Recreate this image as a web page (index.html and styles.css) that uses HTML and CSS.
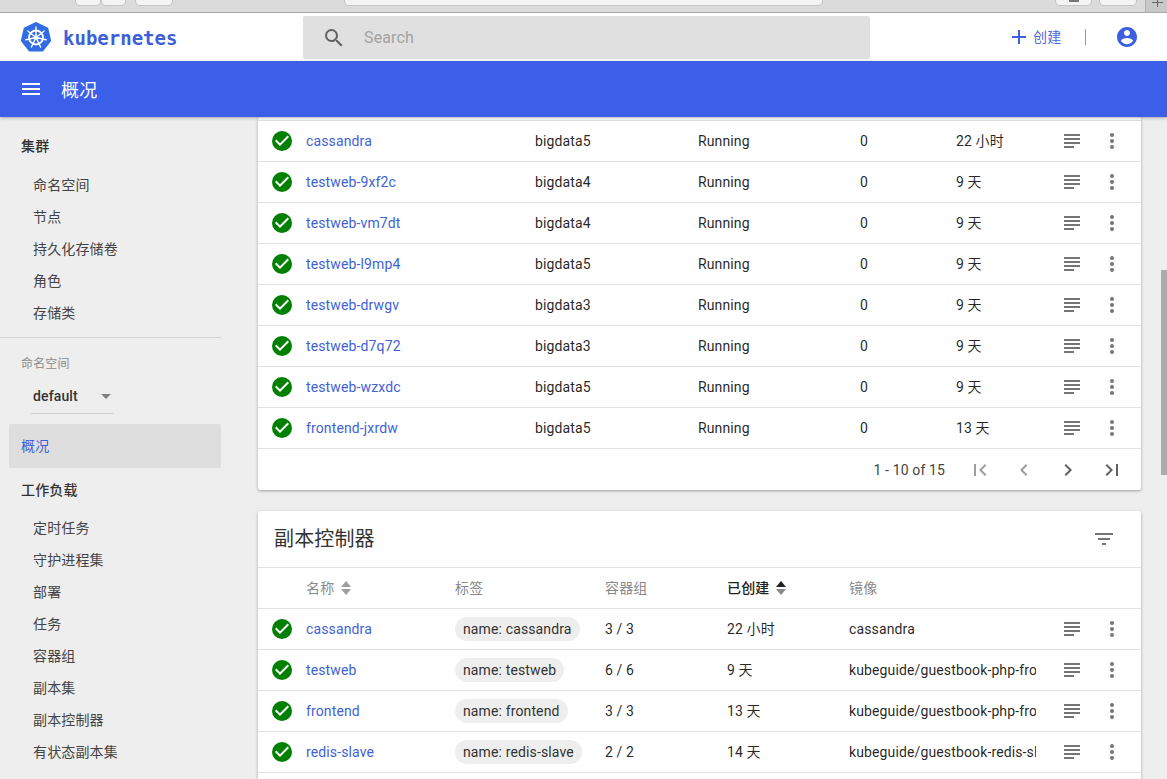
FILE: index.html
```html
<!DOCTYPE html>
<html lang="zh">
<head>
<meta charset="utf-8">
<title>Kubernetes Dashboard</title>
<link rel="stylesheet" href="styles.css">
</head>
<body>
<svg class="defs" width="0" height="0" aria-hidden="true">
  <symbol id="ok" viewBox="0 0 24 24"><path fill="#008000" d="M12 2a10 10 0 1 0 0 20 10 10 0 0 0 0-20z"/><path fill="#fff" d="M10 17l-5-5 1.41-1.41L10 14.17l7.59-7.59L19 8z"/></symbol>
  <symbol id="logs" viewBox="0 0 24 24"><path fill="#757575" d="M14 17H4v2h10v-2zm6-8H4v2h16V9zM4 15h16v-2H4v2zM4 5v2h16V5H4z"/></symbol>
  <symbol id="more" viewBox="0 0 24 24"><path fill="#757575" d="M12 8a2 2 0 1 0 0-4 2 2 0 0 0 0 4zm0 2a2 2 0 1 0 0 4 2 2 0 0 0 0-4zm0 6a2 2 0 1 0 0 4 2 2 0 0 0 0-4z"/></symbol>
  <symbol id="sort" viewBox="0 0 10 14"><path d="M5 0l5 6H0zM5 14L0 8h10z"/></symbol>
</svg>

<div class="browser">
  <div class="tabs">
    <span class="tab t1"></span><span class="tab t2"></span><span class="tab t3"></span>
    <span class="tab t4"></span><span class="tab t5"></span><span class="tab t6"></span>
  </div>
  <div class="newtab"><svg width="21" height="12" viewBox="0 0 21 12"><path fill="none" stroke="#666" d="M6 2.500h11M11.500 0v7"/></svg></div>
</div>

<header class="toolbar">
  <div class="brand">
    <svg class="logo" width="32" height="32" viewBox="0 0 32 32">
      <path fill="#326ce5" stroke="#326ce5" stroke-width="3" stroke-linejoin="round" d="M16 2.500L26.900 7.800 29.600 19.600 22.100 29.100H9.900L2.400 19.600 5.100 7.800z"/>
      <g fill="none" stroke="#fff" stroke-linecap="round">
        <circle cx="16" cy="16.500" r="7" stroke-width="1.800"/>
        <path stroke-width="1.400" d="M16 16.500V6M16 16.500L24.200 10M16 16.500L26.200 18.800M16 16.500L20.600 26M16 16.500L11.400 26M16 16.500L5.800 18.800M16 16.500L7.800 10"/>
      </g>
      <circle cx="16" cy="16.500" r="2.200" fill="#fff"/>
    </svg>
    <span class="wordmark">kubernetes</span>
  </div>
  <div class="search">
    <svg class="search-icon" width="24" height="24" viewBox="0 0 24 24"><path fill="#616161" d="M15.500 14h-.79l-.28-.27A6.470 6.470 0 0 0 16 9.500 6.500 6.500 0 1 0 9.500 16c1.610 0 3.090-.59 4.230-1.570l.27.28v.79l5 4.990L20.490 19l-4.990-5zm-6 0C7.010 14 5 11.990 5 9.500S7.010 5 9.500 5 14 7.010 14 9.500 11.990 14 9.500 14z"/></svg>
    <span class="search-text">Search</span>
  </div>
  <div class="actions">
    <svg class="plus" width="24" height="24" viewBox="0 0 24 24"><path fill="#3b5fe0" d="M19 13h-6v6h-2v-6H5v-2h6V5h2v6h6v2z"/></svg>
    <span class="create">创建</span>
    <span class="vline"></span>
    <svg class="account" width="24" height="24" viewBox="0 0 24 24"><path fill="#3b5fe0" d="M12 2C6.480 2 2 6.480 2 12s4.480 10 10 10 10-4.480 10-10S17.520 2 12 2zm0 3c1.660 0 3 1.340 3 3s-1.340 3-3 3-3-1.340-3-3 1.340-3 3-3zm0 14.200c-2.500 0-4.710-1.280-6-3.220.03-1.990 4-3.080 6-3.080 1.990 0 5.970 1.090 6 3.080-1.290 1.940-3.500 3.220-6 3.220z"/></svg>
  </div>
</header>

<div class="bluebar">
  <svg class="menu" width="24" height="24" viewBox="0 0 24 24"><path fill="#fff" d="M3 18h18v-2H3v2zm0-5h18v-2H3v2zm0-7v2h18V6H3z"/></svg>
  <span class="bluetitle">概况</span>
</div>

<div class="layout">
  <nav class="sidebar">
    <div class="nav-head first">集群</div>
    <div class="nav-item">命名空间</div>
    <div class="nav-item">节点</div>
    <div class="nav-item">持久化存储卷</div>
    <div class="nav-item">角色</div>
    <div class="nav-item">存储类</div>
    <div class="nav-divider"></div>
    <div class="ns-label">命名空间</div>
    <div class="ns-select"><span>default</span><i class="caret"></i></div>
    <div class="nav-active">概况</div>
    <div class="nav-head">工作负载</div>
    <div class="nav-item">定时任务</div>
    <div class="nav-item">守护进程集</div>
    <div class="nav-item">部署</div>
    <div class="nav-item">任务</div>
    <div class="nav-item">容器组</div>
    <div class="nav-item">副本集</div>
    <div class="nav-item">副本控制器</div>
    <div class="nav-item">有状态副本集</div>
  </nav>

  <main class="main">
    <section class="card pods">
      <div class="row pod"><svg class="ic-ok"><use href="#ok"/></svg><a>cassandra</a><span>bigdata5</span><span>Running</span><span>0</span><span>22 小时</span><svg class="ic-logs"><use href="#logs"/></svg><svg class="ic-more"><use href="#more"/></svg></div>
      <div class="row pod"><svg class="ic-ok"><use href="#ok"/></svg><a>testweb-9xf2c</a><span>bigdata4</span><span>Running</span><span>0</span><span>9 天</span><svg class="ic-logs"><use href="#logs"/></svg><svg class="ic-more"><use href="#more"/></svg></div>
      <div class="row pod"><svg class="ic-ok"><use href="#ok"/></svg><a>testweb-vm7dt</a><span>bigdata4</span><span>Running</span><span>0</span><span>9 天</span><svg class="ic-logs"><use href="#logs"/></svg><svg class="ic-more"><use href="#more"/></svg></div>
      <div class="row pod"><svg class="ic-ok"><use href="#ok"/></svg><a>testweb-l9mp4</a><span>bigdata5</span><span>Running</span><span>0</span><span>9 天</span><svg class="ic-logs"><use href="#logs"/></svg><svg class="ic-more"><use href="#more"/></svg></div>
      <div class="row pod"><svg class="ic-ok"><use href="#ok"/></svg><a>testweb-drwgv</a><span>bigdata3</span><span>Running</span><span>0</span><span>9 天</span><svg class="ic-logs"><use href="#logs"/></svg><svg class="ic-more"><use href="#more"/></svg></div>
      <div class="row pod"><svg class="ic-ok"><use href="#ok"/></svg><a>testweb-d7q72</a><span>bigdata3</span><span>Running</span><span>0</span><span>9 天</span><svg class="ic-logs"><use href="#logs"/></svg><svg class="ic-more"><use href="#more"/></svg></div>
      <div class="row pod"><svg class="ic-ok"><use href="#ok"/></svg><a>testweb-wzxdc</a><span>bigdata5</span><span>Running</span><span>0</span><span>9 天</span><svg class="ic-logs"><use href="#logs"/></svg><svg class="ic-more"><use href="#more"/></svg></div>
      <div class="row pod"><svg class="ic-ok"><use href="#ok"/></svg><a>frontend-jxrdw</a><span>bigdata5</span><span>Running</span><span>0</span><span>13 天</span><svg class="ic-logs"><use href="#logs"/></svg><svg class="ic-more"><use href="#more"/></svg></div>
      <div class="pager">
        <span class="range">1 - 10 of 15</span>
        <svg class="pg off" viewBox="0 0 24 24"><path d="M18.410 16.590L13.820 12l4.590-4.590L17 6l-6 6 6 6zM6 6h2v12H6z"/></svg>
        <svg class="pg off" viewBox="0 0 24 24"><path d="M15.410 7.410L14 6l-6 6 6 6 1.410-1.410L10.830 12z"/></svg>
        <svg class="pg" viewBox="0 0 24 24"><path d="M10 6L8.590 7.410 13.170 12l-4.580 4.590L10 18l6-6z"/></svg>
        <svg class="pg" viewBox="0 0 24 24"><path d="M5.590 7.410L10.180 12l-4.590 4.590L7 18l6-6-6-6zM16 6h2v12h-2z"/></svg>
      </div>
    </section>

    <section class="card rcs">
      <div class="card-title"><h2>副本控制器</h2>
        <svg class="filter" viewBox="0 0 24 24"><path fill="#757575" d="M10 18h4v-2h-4v2zM3 6v2h18V6H3zm3 7h12v-2H6v2z"/></svg>
      </div>
      <div class="row head">
        <span class="th first-th">名称<svg class="sort"><use href="#sort"/></svg></span>
        <span class="th">标签</span>
        <span class="th">容器组</span>
        <span class="th active">已创建<svg class="sort" viewBox="0 0 10 14"><path fill="#212121" d="M5 0l5 6H0z"/><path fill="#8a8a8a" d="M5 14L0 8h10z"/></svg></span>
        <span class="th">镜像</span>
      </div>
      <div class="row rc"><svg class="ic-ok"><use href="#ok"/></svg><a>cassandra</a><span><b class="chip">name: cassandra</b></span><span>3 / 3</span><span>22 小时</span><span class="img">cassandra</span><svg class="ic-logs"><use href="#logs"/></svg><svg class="ic-more"><use href="#more"/></svg></div>
      <div class="row rc"><svg class="ic-ok"><use href="#ok"/></svg><a>testweb</a><span><b class="chip">name: testweb</b></span><span>6 / 6</span><span>9 天</span><span class="img">kubeguide/guestbook-php-frontend</span><svg class="ic-logs"><use href="#logs"/></svg><svg class="ic-more"><use href="#more"/></svg></div>
      <div class="row rc"><svg class="ic-ok"><use href="#ok"/></svg><a>frontend</a><span><b class="chip">name: frontend</b></span><span>3 / 3</span><span>13 天</span><span class="img">kubeguide/guestbook-php-frontend</span><svg class="ic-logs"><use href="#logs"/></svg><svg class="ic-more"><use href="#more"/></svg></div>
      <div class="row rc"><svg class="ic-ok"><use href="#ok"/></svg><a>redis-slave</a><span><b class="chip">name: redis-slave</b></span><span>2 / 2</span><span>14 天</span><span class="img">kubeguide/guestbook-redis-slave</span><svg class="ic-logs"><use href="#logs"/></svg><svg class="ic-more"><use href="#more"/></svg></div>
      <div class="row rc"></div>
    </section>
  </main>

  <div class="scrollbar"><div class="thumb"></div></div>
</div>
</body>
</html>
```

FILE: styles.css
```css
* { box-sizing: border-box; }
html, body { margin: 0; height: 100%; }
body {
  height: 779px;
  overflow: hidden;
  display: flex;
  flex-direction: column;
  background: #eee;
  font-family: Roboto, "Noto Sans CJK SC", sans-serif;
  font-size: 14px;
  line-height: 20px;
  letter-spacing: .13px;
  color: rgba(0, 0, 0, .87);
}
.defs { position: absolute; }

.browser {
  height: 13px;
  flex: none;
  display: flex;
  justify-content: space-between;
  background: #dcdbdb;
  border-bottom: 1px solid #a9a9a9;
}
.tabs { flex: 1; display: flex; }
.tab {
  height: 6px;
  background: #f5f4f4;
  border: 1px solid #c4c4c4;
  border-top: 0;
  border-radius: 0 0 5px 5px;
}
.t1 { margin-left: 75px; width: 26px; }
.t2 { width: 25px; }
.t3 { margin-left: 9px; width: 38px; }
.t4 { margin-left: 171px; width: 479px; }
.t5 { margin-left: 232px; width: 37px; display: flex; justify-content: center; }
.t5::before { content: ""; width: 10px; height: 2px; background: #777; }
.t6 { margin-left: 7px; width: 38px; }
.newtab {
  width: 22px;
  height: 12px;
  overflow: hidden;
  background: #c9c8c8;
  border-left: 1px solid #b0b0b0;
}
.newtab svg { display: block; }

.toolbar {
  height: 48px;
  flex: none;
  display: flex;
  align-items: center;
  background: #fff;
}
.brand { width: 303px; display: flex; align-items: center; padding-left: 20px; }
.logo { flex: none; }
.wordmark {
  margin: 2px 0 0 11px;
  font-family: "DejaVu Sans Mono", monospace;
  font-size: 19px;
  font-weight: 700;
  letter-spacing: 0;
  color: #3d5fd9;
}
.search {
  width: 567px;
  height: 43px;
  margin-top: 1px;
  display: flex;
  align-items: center;
  padding-left: 19px;
  background: #e0e0e0;
  border-radius: 2px;
}
.search-text { margin-left: 18px; font-size: 16px; color: #a3a3a3; }
.actions { flex: 1; display: flex; align-items: center; }
.plus { margin-left: 137px; }
.create { margin-left: 2px; font-size: 14px; color: #4a6bdc; }
.vline { width: 1px; height: 16px; margin-left: 24px; background: #7f97e6; }
.account { margin-left: 29px; }

.bluebar {
  height: 56px;
  flex: none;
  position: relative;
  z-index: 2;
  display: flex;
  align-items: center;
  padding-left: 19px;
  background: #3b5fe8;
  box-shadow: 0 1px 3px rgba(0, 0, 0, .3);
}
.bluetitle { margin: 3px 0 0 18px; font-size: 18px; line-height: 24px; color: #fff; }

.layout { flex: 1; min-height: 0; display: flex; overflow: hidden; }

.sidebar { width: 230px; flex: none; padding: 0 9px; }
.nav-head {
  height: 32px;
  margin-top: 6px;
  padding-left: 12px;
  line-height: 32px;
  font-weight: 500;
  font-size: 14px;
  color: #333;
}
.nav-head.first { margin-top: 13px; margin-bottom: 7px; }
.nav-active + .nav-head { margin-bottom: 6px; }
.nav-item {
  height: 32px;
  padding-left: 24px;
  line-height: 32px;
  color: #444;
}
.nav-divider { height: 1px; margin: 8px 0 0 -9px; background: #d4d4d4; }
.ns-label { margin: 18px 0 0 12px; font-size: 12px; line-height: 16px; color: #8a8a8a; }
.ns-select {
  width: 83px;
  height: 35px;
  margin: 7px 0 0 22px;
  padding: 0 2px;
  display: flex;
  align-items: center;
  justify-content: space-between;
  border-bottom: 1px solid #cfcfcf;
  font-weight: 500;
  color: #333;
}
.caret {
  width: 0;
  height: 0;
  margin-right: 1px;
  border: 5px solid transparent;
  border-top: 5px solid #808080;
  border-bottom: 0;
}
.nav-active {
  height: 44px;
  margin-top: 10px;
  padding-left: 12px;
  line-height: 44px;
  background: #dedede;
  border-radius: 2px;
  color: #3f62d8;
}

.main { flex: 1; min-width: 0; padding: 0 19px 0 28px; }
.card {
  background: #fff;
  border-radius: 2px;
  box-shadow: 0 1px 3px rgba(0, 0, 0, .35);
}
.pods { margin-bottom: 21px; }
.pods::before {
  content: "";
  display: block;
  height: 3px;
  border-bottom: 1px solid #e0e0e0;
}

.row {
  height: 41px;
  display: grid;
  align-items: center;
  border-bottom: 1px solid #e2e2e2;
}
.pod { grid-template-columns: 48px 229px 163px 162px 96px 96px 40px 40px; }
.rc { grid-template-columns: 48px 149px 150px 122px 122px 203px 40px 40px; }
.row a { color: #3f62d8; }
.ic-ok { width: 24px; height: 24px; margin-left: 12px; }
.ic-logs, .ic-more { width: 24px; height: 24px; justify-self: center; }
.img { margin-right: 16px; overflow: hidden; white-space: nowrap; }

.pager {
  height: 41px;
  display: flex;
  align-items: center;
  justify-content: flex-end;
  padding-right: 17px;
}
.range { margin-right: 3px; color: #444; }
.pg { width: 24px; height: 24px; margin-left: 20px; fill: #616161; }
.pg.off { fill: #9e9e9e; }

.card-title {
  height: 57px;
  display: flex;
  align-items: center;
  justify-content: space-between;
  padding: 0 25px 0 16px;
  border-bottom: 1px solid #e2e2e2;
}
.card-title h2 { margin: 0 0 1px; font-size: 20px; line-height: 28px; font-weight: 400; color: #333; }
.filter { width: 24px; height: 24px; }

.head { grid-template-columns: 197px 150px 122px 122px 1fr; }
.th { color: #8a8a8a; display: flex; align-items: center; }
.first-th { padding-left: 48px; }
.th.active { color: #212121; font-weight: 500; }
.sort { width: 10px; height: 14px; margin-left: 7px; fill: #9e9e9e; }
.chip {
  display: inline-block;
  height: 24px;
  padding: 0 8px;
  line-height: 24px;
  font-weight: 400;
  background: #eee;
  border-radius: 12px;
  color: #333;
  vertical-align: middle;
}

.scrollbar { width: 7px; flex: none; background: #eee; }
.thumb { width: 6px; height: 205px; margin: 153px 0 0 1px; background: #ababab; }
```
